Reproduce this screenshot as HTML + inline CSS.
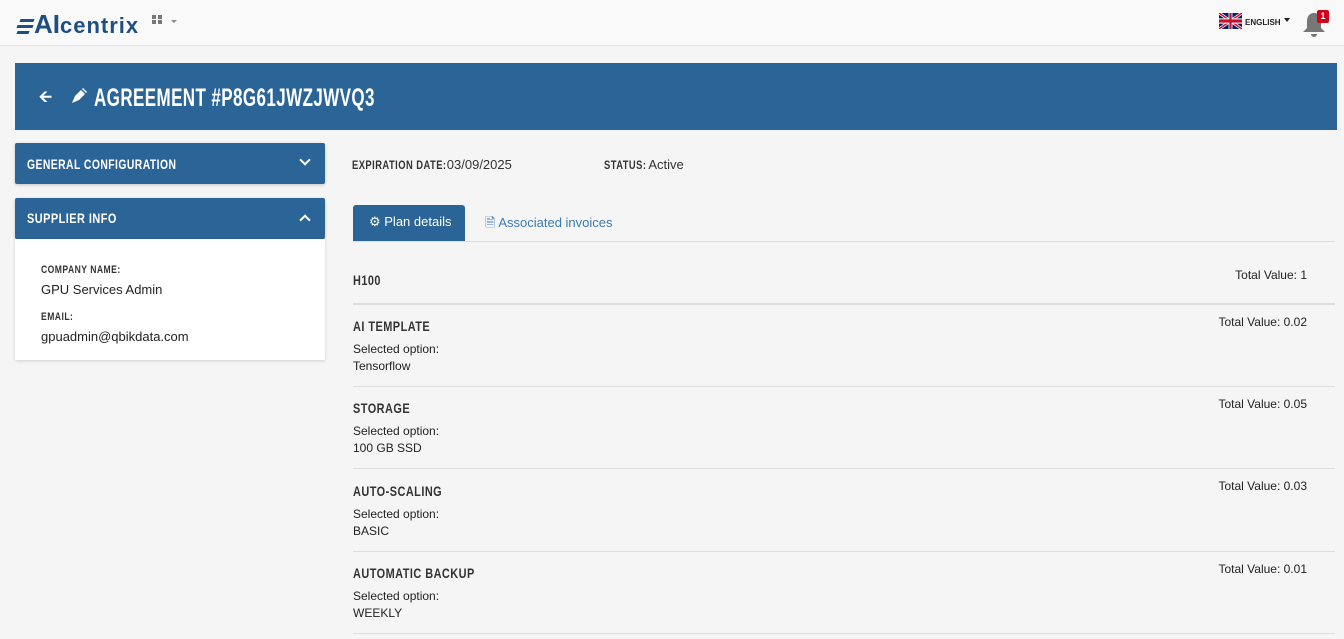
<!DOCTYPE html>
<html><head><meta charset="utf-8"><style>
*{box-sizing:border-box;margin:0;padding:0}
body{width:1344px;height:639px;overflow:hidden;background:#f5f5f5;font-family:"Liberation Sans",sans-serif;color:#333;position:relative}
.c{font-family:"Liberation Sans",sans-serif;font-weight:bold;letter-spacing:.6px;display:inline-block;transform:scaleX(.78);transform-origin:left;white-space:nowrap}
.abs{position:absolute}
.top{position:absolute;left:0;top:0;width:1344px;height:46px;background:#f9f9f9;border-bottom:1px solid #e3e3e3}
.banner{left:15px;top:63px;width:1322px;height:67px;background:#2b6496}
.panel{left:15px;width:310px;background:#2b6496;color:#fff;border-radius:2px;box-shadow:0 1px 3px rgba(0,0,0,.2)}
.lbl{font-size:11px;color:#333}
.t{font-size:13px;color:#222}
.hr{position:absolute;left:353px;width:982px;height:2px;background:#ddd}
.tv{position:absolute;right:37px;font-size:12px;color:#222}
</style></head><body>
<div class="top"></div>
<div class="abs" style="left:16px;top:9px;font-size:24px;font-weight:bold;color:#1f4f82;white-space:nowrap">
<span style="display:inline-block;width:18px;height:18px;vertical-align:-2px;position:relative">
<span class="abs" style="left:4px;top:2px;width:14px;height:3px;background:#1f4f82;transform:skewX(-20deg)"></span>
<span class="abs" style="left:1px;top:8px;width:16px;height:3px;background:#1f4f82;transform:skewX(-20deg)"></span>
<span class="abs" style="left:1px;top:14px;width:12px;height:3px;background:#1f4f82;transform:skewX(-20deg)"></span></span><span style="font-size:26px">AI</span><span style="font-size:22px;letter-spacing:1px">centrix</span></div>
<div class="abs" style="left:152px;top:15px;width:4px;height:4px;background:#777;box-shadow:6px 0 #777,0 5px #777,6px 5px #777"></div>
<div class="abs" style="left:171px;top:20px;border:3px solid transparent;border-top:3px solid #888"></div>
<svg class="abs" style="left:1219px;top:13px" width="23" height="16" viewBox="0 0 60 30" preserveAspectRatio="none"><rect width="60" height="30" fill="#012169"/><path d="M0,0 60,30M60,0 0,30" stroke="#fff" stroke-width="6"/><path d="M0,0 60,30M60,0 0,30" stroke="#C8102E" stroke-width="3"/><path d="M30,0v30M0,15h60" stroke="#fff" stroke-width="10"/><path d="M30,0v30M0,15h60" stroke="#C8102E" stroke-width="6"/></svg>
<div class="abs" style="left:1245px;top:18px;font-size:8px;font-weight:bold;color:#222">ENGLISH</div>
<div class="abs" style="left:1284px;top:18px;border:3px solid transparent;border-top:4px solid #222"></div>
<svg class="abs" style="left:1302px;top:12px" width="24" height="26" viewBox="0 0 24 26"><path d="M12 1c-5 0-7 4-7 8v7l-4 4h22l-4-4V9c0-4-2-8-7-8z" fill="#777"/><path d="M9 22h6a3 3 0 0 1-6 0z" fill="#777"/></svg>
<div class="abs" style="left:1317px;top:10px;width:12px;height:13px;background:#d0021b;color:#fff;font-size:9px;font-weight:bold;text-align:center;line-height:13px;border-radius:2px">1</div>
<div class="abs banner"></div>
<div class="abs" style="left:39px;top:86px;color:#fff;font-size:16px;font-weight:bold">&#129128;</div>
<svg class="abs" style="left:70px;top:87px" width="18" height="18" viewBox="0 0 18 18"><path d="M2 16l3-7 6-6 4 4-6 6z" fill="#fff"/><path d="M12 2l4 4 1-1-4-4z" fill="#fff"/></svg>
<div class="abs c" style="left:94px;top:84px;color:#fff;font-size:25px;transform:scaleX(.68)">AGREEMENT #P8G61JWZJWVQ3</div>
<div class="abs panel" style="top:143px;height:41px"><div class="c" style="position:absolute;left:12px;top:13px;font-size:14px;transform:scaleX(.74)">GENERAL CONFIGURATION</div><div style="position:absolute;right:16px;top:13px;width:8px;height:8px;border-right:2px solid #fff;border-bottom:2px solid #fff;transform:rotate(45deg)"></div></div>
<div class="abs panel" style="top:198px;height:41px"><div class="c" style="position:absolute;left:12px;top:12px;font-size:14px">SUPPLIER INFO</div><div style="position:absolute;right:16px;top:18px;width:8px;height:8px;border-left:2px solid #fff;border-top:2px solid #fff;transform:rotate(45deg)"></div></div>
<div class="abs" style="left:15px;top:239px;width:310px;height:121px;background:#fff;box-shadow:0 1px 3px rgba(0,0,0,.15)"></div>
<div class="abs c lbl" style="left:41px;top:264px;font-size:11px">COMPANY NAME:</div>
<div class="abs t" style="left:41px;top:282px">GPU Services Admin</div>
<div class="abs c lbl" style="left:41px;top:311px;font-size:11px">EMAIL:</div>
<div class="abs t" style="left:41px;top:329px">gpuadmin@qbikdata.com</div>
<div class="abs" style="left:352px;top:157px;font-size:13px;white-space:nowrap"><span class="c" style="font-size:12px;margin-right:-30px">EXPIRATION DATE:</span> 03/09/2025</div>
<div class="abs" style="left:604px;top:157px;font-size:13px;white-space:nowrap"><span class="c" style="font-size:12px;margin-right:-13px">STATUS:</span> Active</div>
<div class="abs" style="left:353px;top:205px;width:112px;height:37px;background:#2b6496;border-radius:3px 3px 0 0;color:#fff;font-size:13px;padding:9px 0 0 16px">&#9881; Plan details</div>
<div class="abs" style="left:485px;top:214px;font-size:13px;color:#3a7ab8">&#128462; Associated invoices</div>
<div class="hr" style="top:241px;height:1px"></div>
<div class="abs c" style="left:353px;top:272px;font-size:14px">H100</div>
<div class="tv" style="top:268px">Total Value: 1</div>
<div class="hr" style="top:303px"></div>
<div class="abs c" style="left:353px;top:318px;font-size:14px">AI TEMPLATE</div><div class="tv" style="top:315px">Total Value: 0.02</div>
<div class="abs t" style="left:353px;top:342px;font-size:12px">Selected option:</div><div class="abs t" style="left:353px;top:359px;font-size:12px">Tensorflow</div>
<div class="hr" style="top:386px;height:1px"></div>
<div class="abs c" style="left:353px;top:400px;font-size:14px">STORAGE</div><div class="tv" style="top:397px">Total Value: 0.05</div>
<div class="abs t" style="left:353px;top:424px;font-size:12px">Selected option:</div><div class="abs t" style="left:353px;top:441px;font-size:12px">100 GB SSD</div>
<div class="hr" style="top:468px;height:1px"></div>
<div class="abs c" style="left:353px;top:483px;font-size:14px">AUTO-SCALING</div><div class="tv" style="top:479px">Total Value: 0.03</div>
<div class="abs t" style="left:353px;top:507px;font-size:12px">Selected option:</div><div class="abs t" style="left:353px;top:524px;font-size:12px">BASIC</div>
<div class="hr" style="top:551px;height:1px"></div>
<div class="abs c" style="left:353px;top:565px;font-size:14px">AUTOMATIC BACKUP</div><div class="tv" style="top:562px">Total Value: 0.01</div>
<div class="abs t" style="left:353px;top:589px;font-size:12px">Selected option:</div><div class="abs t" style="left:353px;top:606px;font-size:12px">WEEKLY</div>
<div class="hr" style="top:633px;height:1px"></div>
</body></html>
